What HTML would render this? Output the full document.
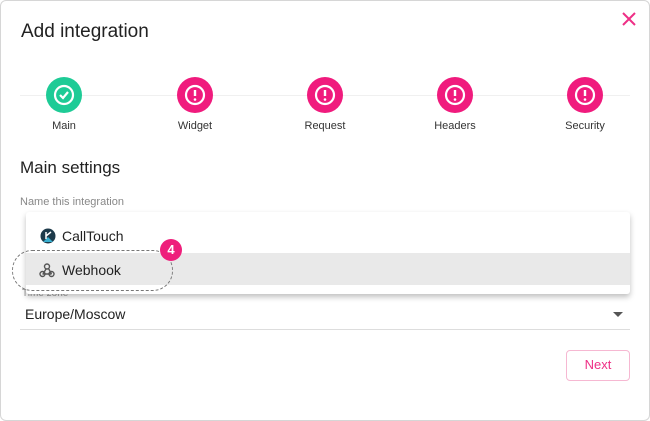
<!DOCTYPE html>
<html><head><style>
*{margin:0;padding:0;box-sizing:border-box}
body{width:650px;height:421px;background:#fff;font-family:"Liberation Sans",sans-serif;position:relative;overflow:hidden}
.frame{position:absolute;left:0;top:0;width:650px;height:421px;border:1px solid #d6d6d6;border-radius:6px}
.abs{position:absolute}
.step{position:absolute;top:77px;width:36px;height:36px;border-radius:50%;background:#f01b7d}
.step.ok{background:#1ecb96}
.lbl{position:absolute;top:120px;font-size:11px;color:#333;width:100px;text-align:center}
</style></head><body>
<div class="frame"></div>
<div class="abs" style="left:21px;top:21px;font-size:19px;color:#222">Add integration</div>
<svg class="abs" style="left:621px;top:11px" width="16" height="16"><path d="M2 2L14 14M14 2L2 14" stroke="#ee2f86" stroke-width="2"/></svg>
<div class="abs" style="left:20px;top:95px;width:610px;height:1px;background:#f0f0f0"></div>

<div class="step ok" style="left:46px"><svg width="36" height="36"><circle cx="18" cy="18" r="9" fill="none" stroke="#fff" stroke-width="2.2"/><path d="M14 18l3 3 5-6" fill="none" stroke="#fff" stroke-width="2.2"/></svg></div>
<div class="step" style="left:177px"><svg width="36" height="36"><circle cx="18" cy="18" r="9" fill="none" stroke="#fff" stroke-width="2.2"/><path d="M18 13v6" stroke="#fff" stroke-width="2.4"/><circle cx="18" cy="22.5" r="1.3" fill="#fff"/></svg></div>
<div class="step" style="left:307px"><svg width="36" height="36"><circle cx="18" cy="18" r="9" fill="none" stroke="#fff" stroke-width="2.2"/><path d="M18 13v6" stroke="#fff" stroke-width="2.4"/><circle cx="18" cy="22.5" r="1.3" fill="#fff"/></svg></div>
<div class="step" style="left:437px"><svg width="36" height="36"><circle cx="18" cy="18" r="9" fill="none" stroke="#fff" stroke-width="2.2"/><path d="M18 13v6" stroke="#fff" stroke-width="2.4"/><circle cx="18" cy="22.5" r="1.3" fill="#fff"/></svg></div>
<div class="step" style="left:567px"><svg width="36" height="36"><circle cx="18" cy="18" r="9" fill="none" stroke="#fff" stroke-width="2.2"/><path d="M18 13v6" stroke="#fff" stroke-width="2.4"/><circle cx="18" cy="22.5" r="1.3" fill="#fff"/></svg></div>
<div class="lbl" style="left:14px">Main</div>
<div class="lbl" style="left:145px">Widget</div>
<div class="lbl" style="left:275px">Request</div>
<div class="lbl" style="left:405px">Headers</div>
<div class="lbl" style="left:535px">Security</div>

<div class="abs" style="left:20px;top:158px;font-size:17px;color:#222">Main settings</div>
<div class="abs" style="left:20px;top:196px;font-size:11px;color:#888">Name this integration</div>
<div class="abs" style="left:22px;top:288px;font-size:10px;color:#999">Time zone</div>
<div class="abs" style="left:25px;top:306px;font-size:14px;color:#222">Europe/Moscow</div>
<svg class="abs" style="left:613px;top:312px" width="10" height="6"><path d="M0 0h10L5 5z" fill="#555"/></svg>
<div class="abs" style="left:20px;top:329px;width:610px;height:1px;background:#ddd"></div>

<div class="abs" style="left:26px;top:212px;width:604px;height:82px;background:#fff;border-radius:3px;box-shadow:0 3px 6px rgba(0,0,0,.25)">
 <div class="abs" style="left:0;top:41px;width:604px;height:32px;background:#e9e9e9"></div>
 <svg class="abs" style="left:14px;top:16px" width="16" height="16"><circle cx="8" cy="8" r="7.5" fill="#1d3a4a"/><path d="M3 14l5-5 5 5z" fill="#3ab0d0"/><path d="M6 4v7M6 8l5-4" stroke="#fff" stroke-width="1.5"/></svg>
 <div class="abs" style="left:36px;top:16px;font-size:14px;color:#222">CallTouch</div>
 <svg class="abs" style="left:13px;top:50px" width="16" height="16"><g fill="none" stroke="#555" stroke-width="1.4"><circle cx="8" cy="4.5" r="2.5"/><circle cx="3.5" cy="12" r="2.5"/><circle cx="12.5" cy="12" r="2.5"/><path d="M7 7l-3 5M9.5 6.5l3 5.5M3.5 12h9"/></g></svg>
 <div class="abs" style="left:36px;top:50px;font-size:14px;color:#222">Webhook</div>
</div>
<div class="abs" style="left:12px;top:250px;width:161px;height:41px;border:1.5px dashed #777;border-radius:20px"></div>
<div class="abs" style="left:160px;top:239px;width:22px;height:22px;border-radius:50%;background:#ee1f7b;color:#fff;font-size:13px;font-weight:bold;text-align:center;line-height:22px">4</div>

<div class="abs" style="left:566px;top:350px;width:64px;height:31px;border:1.5px solid #f6b8d2;border-radius:4px;color:#ee2f86;font-size:13px;text-align:center;line-height:28px">Next</div>
</body></html>
